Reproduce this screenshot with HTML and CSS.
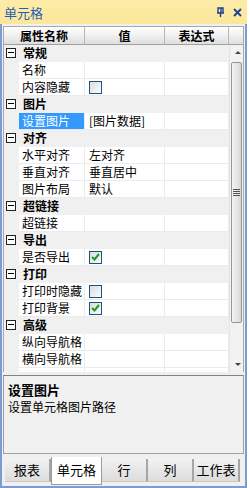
FILE: index.html
```html
<!DOCTYPE html>
<html lang="zh">
<head>
	<meta charset="UTF-8">
	<title>单元格</title>
	<link rel="stylesheet" href="styles.css">
</head>
<body>
	<div class="panel">
		<div class="titlebar">
			<span class="title">单元格</span>
			<span class="tools">
				<svg width="9" height="10" viewBox="0 0 9 10"><path d="M2 1h5v5H2zM1 6h7M4.5 6v4" fill="none" stroke="#1b3f8f" stroke-width="1.4"/><path d="M5 1v5" stroke="#1b3f8f" stroke-width="1.4"/></svg>
				<svg width="9" height="9" viewBox="0 0 9 9"><path d="M1 1l7 7M8 1L1 8" stroke="#1b3f8f" stroke-width="1.8"/></svg>
			</span>
		</div>

		<div class="grid">
			<div class="head">
				<div class="hcell c-name">属性名称</div>
				<div class="hcell c-val">值</div>
				<div class="hcell c-expr">表达式</div>
				<div class="hcell c-sb"></div>
			</div>
			<div class="body">
				<div class="rows">
					<div class="group"><span class="fold"></span>常规</div>
					<div class="row"><div class="name">名称</div><div class="val"></div><div class="expr"></div></div>
					<div class="row"><div class="name">内容隐藏</div><div class="val"><span class="check"></span></div><div class="expr"></div></div>

					<div class="group"><span class="fold"></span>图片</div>
					<div class="row"><div class="name selected">设置图片</div><div class="val">[图片数据]</div><div class="expr"></div></div>

					<div class="group"><span class="fold"></span>对齐</div>
					<div class="row"><div class="name">水平对齐</div><div class="val">左对齐</div><div class="expr"></div></div>
					<div class="row"><div class="name">垂直对齐</div><div class="val">垂直居中</div><div class="expr"></div></div>
					<div class="row"><div class="name">图片布局</div><div class="val">默认</div><div class="expr"></div></div>

					<div class="group"><span class="fold"></span>超链接</div>
					<div class="row"><div class="name">超链接</div><div class="val"></div><div class="expr"></div></div>

					<div class="group"><span class="fold"></span>导出</div>
					<div class="row"><div class="name">是否导出</div><div class="val"><span class="check on"><svg width="9" height="8" viewBox="0 0 9 8"><path d="M1 4l2.5 2.5L8 1" fill="none" stroke="#1f9b1f" stroke-width="2"/></svg></span></div><div class="expr"></div></div>

					<div class="group"><span class="fold"></span>打印</div>
					<div class="row"><div class="name">打印时隐藏</div><div class="val"><span class="check"></span></div><div class="expr"></div></div>
					<div class="row"><div class="name">打印背景</div><div class="val"><span class="check on"><svg width="9" height="8" viewBox="0 0 9 8"><path d="M1 4l2.5 2.5L8 1" fill="none" stroke="#1f9b1f" stroke-width="2"/></svg></span></div><div class="expr"></div></div>

					<div class="group"><span class="fold"></span>高级</div>
					<div class="row"><div class="name">纵向导航格</div><div class="val"></div><div class="expr"></div></div>
					<div class="row"><div class="name">横向导航格</div><div class="val"></div><div class="expr"></div></div>
					<div class="row"><div class="name"></div><div class="val"></div><div class="expr"></div></div>
				</div>
				<div class="scrollbar">
					<div class="arrow up"></div>
					<div class="thumb"><span class="grip"></span></div>
					<div class="track"></div>
					<div class="arrow down"></div>
				</div>
			</div>
		</div>

		<div class="desc">
			<div class="desc-title">设置图片</div>
			<div class="desc-text">设置单元格图片路径</div>
		</div>

		<div class="tabs">
			<div class="tab">报表</div>
			<div class="tab active">单元格</div>
			<div class="tab">行</div>
			<div class="tab">列</div>
			<div class="tab">工作表</div>
		</div>
	</div>
</body>
</html>
```

FILE: styles.css
```css
*{padding: 0;margin: 0;box-sizing: border-box;}
body{
	background: #fff;
	font-family: "Noto Sans CJK SC", "Liberation Sans", sans-serif;
	font-size: 12px;
	color: #000;
}
.panel{
	width: 247px;
	height: 488px;
	background: #f0f0f0;
	border-left: 2px solid #7c9bd3;
	border-right: 2px solid #7c9bd3;
	border-bottom: 2px solid #7c9bd3;
	display: flex;
	flex-direction: column;
}

/* title */
.titlebar{
	height: 24px;
	margin: 0 -2px;
	padding: 0 5px 0 4px;
	background: linear-gradient(#fdeca8, #fbe79a);
	display: flex;
	align-items: center;
	justify-content: space-between;
}
.titlebar .title{
	color: #1f5fb5;
	font-size: 13px;
}
.titlebar .tools{
	display: flex;
	gap: 8px;
	align-items: center;
}

/* grid */
.grid{
	margin: 2px 1px 0 1px;
	border: 1px solid #a9a9a9;
	border-bottom: none;
	background: #f0f0f0;
}
.head{
	display: flex;
	height: 18px;
}
.hcell{
	height: 18px;
	line-height: 17px;
	text-align: center;
	font-weight: bold;
	font-size: 12px;
	background: linear-gradient(#ffffff, #f2f2f2 45%, #dedede);
	border-right: 1px solid #b8b8b8;
	border-bottom: 1px solid #a0a0a0;
	overflow: hidden;
}
.c-name{width: 81px;}
.c-val{width: 80px;}
.c-expr{width: 64px;}
.c-sb{flex: 1;border-right: none;}

.body{
	display: flex;
	height: 327px;
	overflow: hidden;
}
.rows{
	width: 225px;
}
.group{
	height: 17px;
	line-height: 16px;
	font-weight: bold;
	font-size: 12px;
	padding-left: 2px;
	display: flex;
	align-items: center;
	gap: 7px;
	border-bottom: 1px solid #f0f0f0;
	overflow: hidden;
}
.fold{
	flex: none;
	width: 10px;
	height: 10px;
	border: 1px solid #222;
	background: #fff;
	position: relative;
}
.fold::after{
	content: "";
	position: absolute;
	left: 1px;
	right: 1px;
	top: 3px;
	height: 1px;
	background: #000;
}
.row{
	display: flex;
	height: 17px;
	padding-left: 15px;
}
.row > div{
	height: 17px;
	line-height: 16px;
	background: #fff;
	border-bottom: 1px solid #ebebeb;
	border-right: 1px solid #ebebeb;
	padding-left: 3px;
	white-space: nowrap;
	overflow: hidden;
	display: flex;
	align-items: center;
}
.row .name{width: 66px;}
.row .val{width: 80px;padding-left: 4px;}
.row .expr{width: 64px;}
.row .name.selected{
	background: #3399ff;
	color: #fff;
}
.check{
	width: 13px;
	height: 13px;
	border: 1px solid #1c5180;
	background: linear-gradient(135deg, #dcdcdc, #fbfbfb);
	display: flex;
	align-items: center;
	justify-content: center;
}

/* scrollbar */
.scrollbar{
	flex: 1;
	display: flex;
	flex-direction: column;
	background: #f2f2f2;
	border-left: 1px solid #e4e4e4;
}
.arrow{
	height: 17px;
	position: relative;
}
.arrow::after{
	content: "";
	position: absolute;
	left: 5px;
	top: 6px;
	border-left: 3px solid transparent;
	border-right: 3px solid transparent;
}
.arrow.up::after{border-bottom: 3px solid #444;}
.arrow.down::after{border-top: 3px solid #444;top: 8px;}
.thumb{
	height: 261px;
	margin: 0 1px;
	border: 1px solid #979797;
	border-radius: 2px;
	background: linear-gradient(90deg, #f3f3f3, #e6e6e6 50%, #d6d6d6);
	display: flex;
	align-items: center;
	justify-content: center;
}
.grip{
	width: 7px;
	height: 7px;
	background: repeating-linear-gradient(#555 0 1px, transparent 1px 2px);
}
.track{flex: 1;}

/* description */
.desc{
	margin: 3px 1px 0 1px;
	height: 79px;
	border: 1px solid #a0a0a0;
	border-top-color: #828282;
	padding: 5px 4px;
	line-height: 17px;
}
.desc-title{font-weight: bold;font-size: 13px;}
.desc-text{font-size: 12px;}

/* tabs */
.tabs{
	display: flex;
	margin: 3px 0 0 3px;
	align-items: flex-start;
}
.tab{
	width: 46px;
	height: 23px;
	margin-top: 2px;
	line-height: 22px;
	text-align: center;
	font-size: 13px;
	background: linear-gradient(#f2f2f2, #dcdcdc);
	border-right: 2px solid #a6a6a6;
	border-bottom: 1px solid #c8c8c8;
}
.tab.active{
	width: 51px;
	height: 28px;
	margin-top: 0;
	line-height: 26px;
	background: #fff;
	border: 1px solid #9a9a9a;
	border-top: none;
}
```
